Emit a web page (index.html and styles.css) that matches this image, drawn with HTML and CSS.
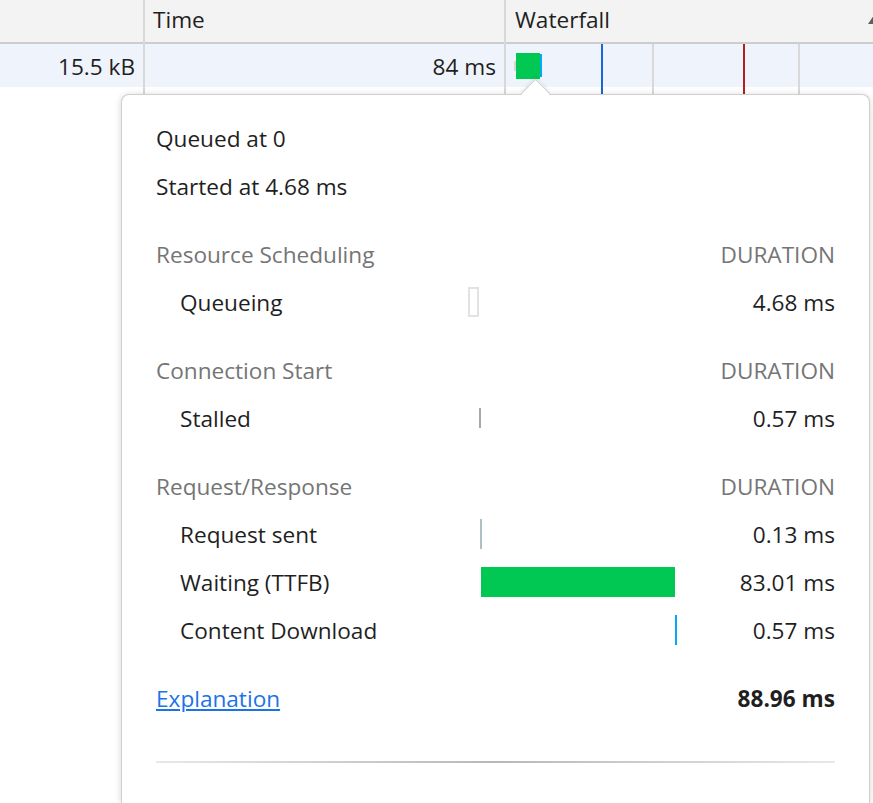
FILE: index.html
```html
<!DOCTYPE html>
<html lang="en">
<head>
<meta charset="utf-8">
<title>Timing</title>
<link rel="stylesheet" href="styles.css">
</head>
<body>
<div class="table">
  <div class="col col-size">
    <div class="th"></div>
    <div class="td num">15.5 kB</div>
  </div>
  <div class="col col-time">
    <div class="th">Time</div>
    <div class="td num">84 ms</div>
  </div>
  <div class="col col-wf">
    <div class="th th-wf"><span>Waterfall</span><span class="sort"></span></div>
    <div class="wf-body">
      <div class="td wf-row">
        <span class="wf-queue"></span><span class="wf-wait"></span><span class="wf-dl"></span>
      </div>
      <span class="marker grid-line" style="left:146px"></span>
      <span class="marker grid-line" style="left:292px"></span>
      <span class="marker dcl" style="left:95px"></span>
      <span class="marker load" style="left:237px"></span>
    </div>
  </div>
</div>

<div class="pop">
  <span class="arrow"></span>
  <div class="line">Queued at 0</div>
  <div class="line">Started at 4.68 ms</div>

  <div class="trow sec"><span class="name">Resource Scheduling</span><span></span><span class="val">DURATION</span></div>
  <div class="trow">
    <span class="lbl">Queueing</span>
    <span class="bar-cell"><span class="bar queue" style="margin-left:0;width:11px"></span></span>
    <span class="val">4.68 ms</span>
  </div>

  <div class="trow sec"><span class="name">Connection Start</span><span></span><span class="val">DURATION</span></div>
  <div class="trow">
    <span class="lbl">Stalled</span>
    <span class="bar-cell"><span class="bar stalled" style="margin-left:11px;width:2px"></span></span>
    <span class="val">0.57 ms</span>
  </div>

  <div class="trow sec"><span class="name">Request/Response</span><span></span><span class="val">DURATION</span></div>
  <div class="trow">
    <span class="lbl">Request sent</span>
    <span class="bar-cell"><span class="bar sent" style="margin-left:12px;width:2px"></span></span>
    <span class="val">0.13 ms</span>
  </div>
  <div class="trow">
    <span class="lbl">Waiting (TTFB)</span>
    <span class="bar-cell"><span class="bar waiting" style="margin-left:13px;width:194px"></span></span>
    <span class="val">83.01 ms</span>
  </div>
  <div class="trow">
    <span class="lbl">Content Download</span>
    <span class="bar-cell"><span class="bar download" style="margin-left:207px;width:2px"></span></span>
    <span class="val">0.57 ms</span>
  </div>

  <div class="total">
    <a class="link" href="#">Explanation</a>
    <span class="sum">88.96 ms</span>
  </div>
  <div class="divider"></div>
</div>
</body>
</html>
```

FILE: styles.css
```css
html, body {
  margin: 0;
  padding: 0;
}
body {
  font-family: "Open Sans", "Noto Sans", sans-serif;
  font-size: 22.6px;
  color: #1f1f1f;
  background: #fff;
  width: 873px;
  height: 803px;
  overflow: hidden;
  position: relative;
}

.table {
  display: flex;
  height: 803px;
}
.col {
  display: flex;
  flex-direction: column;
  border-right: 2px solid #d8d8d8;
}
.col-size { width: 143px; }
.col-time { width: 359px; }
.col-wf { flex: 1; min-width: 0; border-right: 0; }

.th {
  height: 42px;
  box-sizing: border-box;
  flex: none;
  background: #f3f3f3;
  border-bottom: 2px solid #cdcdcd;
  display: flex;
  align-items: center;
  padding: 0 8px 4px 8px;
  overflow: hidden;
  white-space: nowrap;
}
.th-wf {
  justify-content: space-between;
  padding-left: 9px;
}
.col .th { height: 44px; }
.sort {
  width: 0;
  height: 0;
  border-left: 6px solid transparent;
  border-right: 6px solid transparent;
  border-bottom: 9px solid #5f5f5f;
  margin-right: -15px;
  margin-top: 0;
}

.td {
  height: 43px;
  flex: none;
  background: #eff3fb;
  display: flex;
  align-items: center;
  padding: 2px 8px 0 8px;
  box-sizing: border-box;
  white-space: nowrap;
}
.num { justify-content: flex-end; }

.wf-body {
  position: relative;
  flex: 1;
}
.wf-row { padding: 0; }
.wf-queue {
  width: 2px;
  height: 10px;
  margin-left: 8px;
  background: #d6d6d6;
}
.wf-wait {
  width: 24px;
  height: 26px;
  background: #00c853;
}
.wf-dl {
  width: 2px;
  height: 23px;
  background: #03a9f4;
}
.marker {
  position: absolute;
  top: 0;
  bottom: 0;
  width: 2px;
}
.grid-line { background: #d9d9d9; }
.dcl { background: #1a66d2; }
.load { background: #b21f1f; }

.pop {
  position: absolute;
  left: 121px;
  top: 94px;
  width: 749px;
  height: 709px;
  box-sizing: border-box;
  background: #fff;
  border: 1px solid #cfcfcf;
  border-bottom: 0;
  border-radius: 8px 8px 0 0;
  box-shadow: 0 1px 7px rgba(0, 0, 0, 0.16);
  padding: 19px 34px 0 34px;
}
.arrow {
  position: absolute;
  left: 403px;
  top: -12px;
  width: 21px;
  height: 21px;
  box-sizing: border-box;
  background: #fff;
  border-top: 1px solid #cfcfcf;
  border-left: 1px solid #cfcfcf;
  transform: rotate(45deg);
  box-shadow: -2px -2px 3px rgba(0, 0, 0, 0.05);
}

.line {
  height: 48px;
  display: flex;
  align-items: center;
}

.trow {
  display: grid;
  grid-template-columns: 312px 208px 1fr;
  height: 48px;
  align-items: center;
  white-space: nowrap;
}
.sec {
  margin-top: 20px;
  color: #757575;
}
.lbl { padding-left: 24px; }
.val { text-align: right; }
.bar-cell {
  display: flex;
  align-items: center;
  height: 100%;
}
.bar {
  display: block;
  height: 30px;
  box-sizing: border-box;
  flex: none;
}
.queue { border: 2px solid #e2e2e2; background: #fff; }
.stalled { height: 20px; background: #a8a8a8; }
.sent { background: #b0bec5; }
.waiting { background: #00c853; }
.download { background: #03a9f4; }

.total {
  margin-top: 20px;
  height: 48px;
  display: flex;
  align-items: center;
  justify-content: space-between;
}
.link {
  color: #1a73e8;
  text-decoration: underline;
}
.sum { font-weight: 700; }

.divider {
  margin-top: 39px;
  height: 2px;
  background: linear-gradient(to right, #e8e8e8, #b8b8b8 50%, #e8e8e8);
}
```
